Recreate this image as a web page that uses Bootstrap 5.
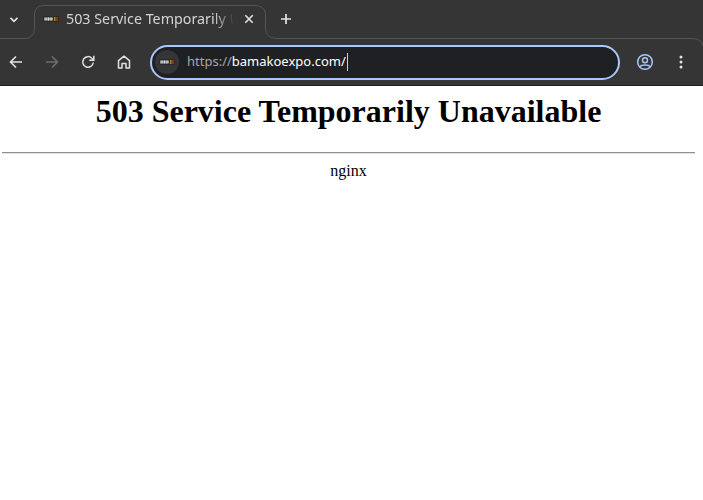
<!DOCTYPE html>
<html lang="en">
<head>
<meta charset="utf-8">
<title>503 Service Temporarily Unavailable</title>
<link href="https://cdn.jsdelivr.net/npm/bootstrap@5.3.0/dist/css/bootstrap.min.css" rel="stylesheet">
<style>
html,body{margin:0;height:100%;background:#fff;overflow:hidden}
.chrome-top{height:86px;background:#353535;border-bottom:1px solid #1f1f1f;font-family:"Noto Sans","Open Sans",sans-serif}
.strip{height:38px;position:relative}
.strip-line{position:absolute;left:0;top:0;width:703px;height:46px;pointer-events:none}
.tab-list-btn{width:34px;height:38px;padding:1px 6px 0 0}
.tab-item{width:232px;height:38px;padding:0 9px;color:#d4d4d4;font-size:14.3px;position:relative;white-space:nowrap}
.tab-title{width:169px;margin-left:7px;padding-bottom:1px;overflow:hidden;-webkit-mask-image:linear-gradient(to right,#000 88%,transparent 100%);mask-image:linear-gradient(to right,#000 88%,transparent 100%);line-height:19px}
.tab-close{width:16px;height:16px;margin-left:7px;flex-shrink:0}
.new-tab{width:40px;height:38px}
.toolbar{height:47px;padding-top:1px;margin-left:-2px}
.tool{width:36px;height:46px;flex:none}
.omni{width:470px;height:35px;margin-left:8px;border:2px solid #a8c7fa;border-radius:18px;background:#1f2024;padding-left:3px;font-size:13px;flex:none}
.omni-site{width:24px;height:24px;border-radius:50%;background:#333537;flex:none}
.url-scheme{color:#a4a6a8;margin-left:8px}
.url-host{color:#fff}
.caret-bar{display:inline-block;width:1px;height:18px;background:#d0d0d0;margin-left:1px}
.tool-account{margin-left:7px}
.notfound{padding:0 8px 0 2px;width:703px;font-family:"Liberation Serif","Times New Roman",serif;color:#000;text-align:center}
.notfound h1{font-family:inherit;font-weight:700;font-size:32px;line-height:37px;margin:7px 0 22px}
.notfound hr{margin:0;border:0;border-top:1px solid #8f8f8f;opacity:1;border-bottom:1px solid #e4e4e4;height:2px}
.server-name{font-size:16px;line-height:18px;margin-top:8px}
</style>
</head>
<body>
<div class="chrome-top">
  <div class="strip d-flex align-items-center">
    <svg class="strip-line" viewBox="0 0 703 46" fill="none"><path d="M0 38.500H24C30.500 38.500 34.500 35 34.500 28V15C34.500 9 38 5.500 44 5.500H255C261 5.500 265.500 9 265.500 15V28C265.500 35 270 38.500 277 38.500H692C698 38.500 702 41 703 46" stroke="#555"/></svg>
    <div class="tab-list-btn d-flex align-items-center justify-content-center">
      <svg width="10" height="8" viewBox="0 0 10 8" fill="none"><path d="M1.500 1.800 5 5.300 8.500 1.800" stroke="#e3e3e3" stroke-width="1.700"/></svg>
    </div>
    <div class="tab-item d-flex align-items-center">
      <svg class="flex-shrink-0" width="16" height="6" viewBox="0 0 16 6"><rect width="16" height="6" fill="#2a2a2a"/><path d="M1 1.500h9v3H1z" fill="#999"/><path d="M2.500 1.500h1v3h-1zM5 1.500h1v3H5zM7.500 1.500h1v3h-1z" fill="#ddd"/><rect x="11" y="1" width="1.500" height="4" fill="#a89020"/><rect x="13" y="1" width="2" height="4" fill="#a02818"/></svg>
      <span class="tab-title">503 Service Temporarily Unavailable</span>
      <svg class="tab-close" viewBox="0 0 16 16" fill="none"><path d="M4.300 4.300 11.700 11.700M11.700 4.300 4.300 11.700" stroke="#e3e3e3" stroke-width="1.600"/></svg>
    </div>
    <div class="new-tab d-flex align-items-center justify-content-center">
      <svg width="12" height="12" viewBox="0 0 12 12" fill="none"><path d="M6 1V11M1 6H11" stroke="#e3e3e3" stroke-width="1.700"/></svg>
    </div>
  </div>
  <div class="toolbar d-flex align-items-center">
    <div class="tool d-flex align-items-center justify-content-center">
      <svg width="14" height="14" viewBox="0 0 14 14" fill="none"><path d="M13 7H2M7 1.500 1.500 7 7 12.500" stroke="#e3e3e3" stroke-width="1.600"/></svg>
    </div>
    <div class="tool d-flex align-items-center justify-content-center">
      <svg width="14" height="14" viewBox="0 0 14 14" fill="none"><path d="M1 7H12M7 1.500 12.500 7 7 12.500" stroke="#6e6e6e" stroke-width="1.600"/></svg>
    </div>
    <div class="tool d-flex align-items-center justify-content-center">
      <svg width="14" height="14" viewBox="0 0 14 14" fill="none"><path d="M12.300 7.500A5.300 5.300 0 1 1 10.800 3.200L12.500 4.700" stroke="#e3e3e3" stroke-width="1.500"/><path d="M12.800 .8V5.300H8.300" stroke="#e3e3e3" stroke-width="1.500"/></svg>
    </div>
    <div class="tool d-flex align-items-center justify-content-center">
      <svg width="14" height="14" viewBox="0 0 14 14" fill="none"><path d="M1.500 13V5.700L7 1.200 12.500 5.700V13H9V8.500H5V13Z" stroke="#e3e3e3" stroke-width="1.500" stroke-linejoin="round"/></svg>
    </div>
    <div class="omni d-flex align-items-center">
      <div class="omni-site d-flex align-items-center justify-content-center">
        <svg width="16" height="6" viewBox="0 0 16 6"><rect width="16" height="6" fill="#2a2a2a"/><path d="M1 1.500h9v3H1z" fill="#999"/><path d="M2.500 1.500h1v3h-1zM5 1.500h1v3H5zM7.500 1.500h1v3h-1z" fill="#ddd"/><rect x="11" y="1" width="1.500" height="4" fill="#a89020"/><rect x="13" y="1" width="2" height="4" fill="#a02818"/></svg>
      </div>
      <span class="url-scheme">https://</span><span class="url-host">bamakoexpo.com/</span><span class="caret-bar"></span>
    </div>
    <div class="tool tool-account d-flex align-items-center justify-content-center">
      <svg width="18" height="18" viewBox="0 0 18 18" fill="none"><circle cx="9" cy="9" r="7.300" stroke="#a8c7fa" stroke-width="1.500"/><circle cx="9" cy="7.200" r="2.500" stroke="#a8c7fa" stroke-width="1.400"/><path d="M4 13.500C5.500 11.500 12.500 11.500 14 13.500" stroke="#a8c7fa" stroke-width="1.400"/></svg>
    </div>
    <div class="tool d-flex align-items-center justify-content-center">
      <svg width="4" height="14" viewBox="0 0 4 14" fill="#e3e3e3"><circle cx="2" cy="2" r="1.500"/><circle cx="2" cy="7" r="1.500"/><circle cx="2" cy="12" r="1.500"/></svg>
    </div>
  </div>
</div>
<main class="notfound">
  <h1>503 Service Temporarily Unavailable</h1>
  <hr>
  <div class="server-name">nginx</div>
</main>
</body>
</html>
